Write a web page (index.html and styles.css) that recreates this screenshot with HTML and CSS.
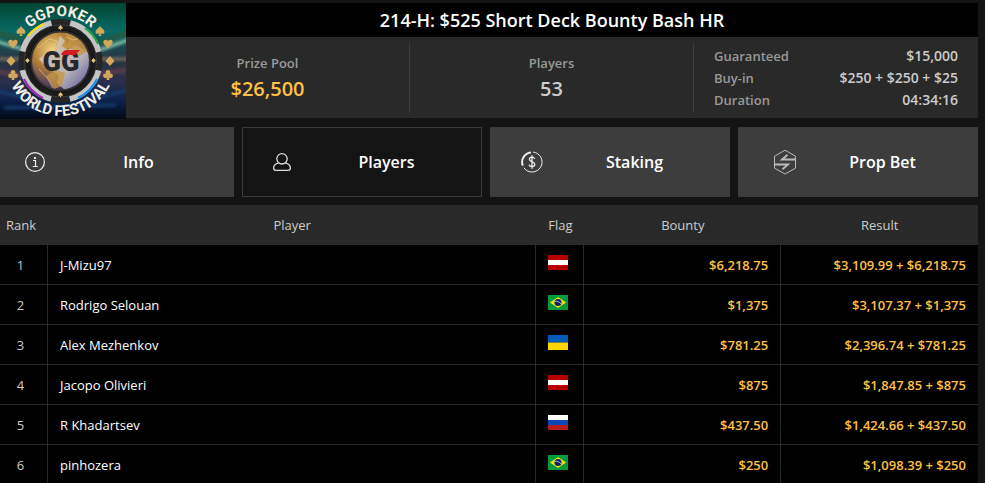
FILE: index.html
```html
<!DOCTYPE html>
<html lang="en">
<head>
  <meta charset="UTF-8">
  <title>214-H: $525 Short Deck Bounty Bash HR</title>
  <meta name="viewport" content="width=device-width, initial-scale=1.0">
  <link rel="stylesheet" href="styles.css">
</head>
<body>
  <!-- Shared flags and suits -->
  <svg class="sprite" aria-hidden="true">
    <symbol id="flag-at" viewBox="0 0 20 15">
      <path fill="#b40000" d="M0 0h20v15H0z"/>
      <path fill="#fff" d="M0 5h20v5H0z"/>
    </symbol>
    <symbol id="flag-br" viewBox="0 0 20 15">
      <path fill="#009b3a" d="M0 0h20v15H0z"/>
      <path fill="#fee000" d="M2 7.5L10 2l8 5.5-8 5.5z"/>
      <circle cx="10" cy="7.5" r="3.5" fill="#0b2272"/>
      <path stroke="#b9c3e6" stroke-width=".9" fill="none" d="M6.8 6.5c2.2-.4 4.5.3 6.2 2.3"/>
    </symbol>
    <symbol id="flag-ua" viewBox="0 0 20 15">
      <path fill="#005bbb" d="M0 0h20v7.5H0z"/>
      <path fill="#ffd500" d="M0 7.5h20V15H0z"/>
    </symbol>
    <symbol id="flag-ru" viewBox="0 0 20 15">
      <path fill="#fff" d="M0 0h20v5H0z"/>
      <path fill="#0c47b7" d="M0 5h20v5H0z"/>
      <path fill="#b71c1c" d="M0 10h20v5H0z"/>
    </symbol>
    <symbol id="spade" viewBox="0 0 10 10">
      <path d="M5 0C4 2 .5 3.6.5 6c0 2 2.7 2.5 4 1L3.500 10h3l-1-3c1.300 1.500 4 1 4-1C9.500 3.600 6 2 5 0z"/>
    </symbol>
    <symbol id="heart" viewBox="0 0 10 10">
      <path d="M5 9.8C4 7.5.3 5.5.3 3 .3.5 3.8 0 5 2.3 6.2 0 9.7.5 9.7 3 9.7 5.5 6 7.5 5 9.8z"/>
    </symbol>
    <symbol id="diamond" viewBox="0 0 10 10">
      <path d="M5 0l4.5 5L5 10 .5 5z"/>
    </symbol>
    <symbol id="club" viewBox="0 0 10 10">
      <circle cx="5" cy="2.5" r="2.4"/><circle cx="2.5" cy="5.8" r="2.4"/><circle cx="7.5" cy="5.8" r="2.4"/>
      <path d="M4.5 4h1l1 6h-3z"/>
    </symbol>
  </svg>

  <div class="page">
    <!-- Tournament summary -->
    <header class="summary">
      <svg class="logo" viewBox="0 0 132 116" role="img" aria-label="GGPoker World Festival">
        <defs>
          <linearGradient id="sky" x1="0" y1="0" x2="0" y2="1">
            <stop offset="0" stop-color="#00452f"/>
            <stop offset=".25" stop-color="#086b68"/>
            <stop offset=".38" stop-color="#1d4750"/>
            <stop offset=".5" stop-color="#263440"/>
            <stop offset=".68" stop-color="#2b2e4d"/>
            <stop offset=".85" stop-color="#0a2149"/>
            <stop offset="1" stop-color="#020814"/>
          </linearGradient>
          <radialGradient id="globe" cx=".35" cy=".3" r=".8">
            <stop offset="0" stop-color="#f0d287"/>
            <stop offset=".4" stop-color="#b48235"/>
            <stop offset=".75" stop-color="#5a4260"/>
            <stop offset="1" stop-color="#28204c"/>
          </radialGradient>
          <linearGradient id="sea" x1="0" y1="0" x2="1" y2="1">
            <stop offset="0" stop-color="#e2c99c"/>
            <stop offset=".6" stop-color="#b9b2b8"/>
            <stop offset="1" stop-color="#4b4a9c"/>
          </linearGradient>
          <filter id="soft"><feGaussianBlur stdDeviation="1.5"/></filter>
          <clipPath id="globe-clip"><circle cx="66.5" cy="58" r="28.5"/></clipPath>
          <path id="arc-top" d="M21.5 58a45 45 0 0 1 90 0"/>
          <path id="arc-bottom" d="M11.5 58a55 55 0 0 0 110 0"/>
        </defs>
        <path fill="url(#sky)" d="M0 0h132v116H0z"/>
        <!-- stadium stands -->
        <g filter="url(#soft)" fill="none">
          <path stroke="#8bc6ab" stroke-width="3" d="M-2 37l30 9M134 37l-28 10"/>
          <path stroke="#245c43" stroke-width="5" d="M134 29l-30 12M-2 28l30 9"/>
          <path stroke="#7d7164" stroke-width="3" d="M-2 56h30M134 56h-30"/>
          <path stroke="#593b4c" stroke-width="5" d="M-2 68l30 4M134 67l-30 4"/>
          <path stroke="#123c70" stroke-width="3" d="M-2 87l34 8M134 87l-32 8M10 105l112-3"/>
        </g>
        <!-- chip -->
        <circle cx="66.5" cy="58" r="42" fill="#252525"/>
        <circle cx="66.5" cy="58" r="39" fill="none" stroke="#c3c5c5" stroke-width="6" stroke-dasharray="42.3 18.96" stroke-dashoffset="-9.5"/>
        <g fill="none" stroke-width="2">
          <path stroke="#f1e000" d="M34 33a41 41 0 0 1 16-12"/>
          <path stroke="#18a83b" d="M91 25a41 41 0 0 1 13 16"/>
          <path stroke="#9a25b9" d="M30 76a41 41 0 0 0 19 19"/>
          <path stroke="#168ef0" d="M103 76a41 41 0 0 1-19 19"/>
        </g>
        <circle cx="66.5" cy="58" r="36" fill="#1b1b1b" stroke="#3b3b38"/>
        <circle cx="66.5" cy="58" r="31" fill="#30302e" stroke="#111"/>
        <g fill="#e5c675">
          <use href="#spade" x="64" y="22" width="5" height="5"/>
          <use href="#spade" x="64" y="89" width="5" height="5"/>
          <use href="#diamond" x="31" y="55" width="5" height="5"/>
          <use href="#diamond" x="97" y="55" width="5" height="5"/>
        </g>
        <circle cx="66.5" cy="58" r="28.5" fill="url(#globe)"/>
        <g clip-path="url(#globe-clip)">
          <path fill="url(#sea)" d="M66 33l5 5-4 5 7 4 7-5 8 4 8 5v28L84 86l-12 2-9-8 2-8-12-7-8-9 7-7 8 1 3-8z"/>
          <path fill="#c59645" opacity=".8" d="M70 29l16 4 8 15-9 5-6-6-7-3 3-7zM62 67l9 3-3 13-8 3-8-13z"/>
          <path fill="none" stroke="#f0d59a" stroke-width=".8" opacity=".7" d="M44 45l11-9 8 2-3 5 6 5M72 34l7 3 8-2M45 66l9 10 5 10"/>
        </g>
        <text class="logo-mark" x="67" y="68" text-anchor="middle">GG</text>
        <path fill="#d51c24" d="M67 52c1-3 3-5 6-5h13l-5 5z"/>
        <g fill="#d2a95a">
          <use href="#spade" x="22" y="23" width="10" height="10"/>
          <use href="#heart" x="14" y="36" width="10" height="10"/>
          <use href="#diamond" x="12" y="53" width="10" height="10"/>
          <use href="#club" x="14" y="67" width="10" height="10"/>
          <use href="#spade" x="101" y="23" width="10" height="10"/>
          <use href="#heart" x="109" y="36" width="10" height="10"/>
          <use href="#diamond" x="111" y="53" width="10" height="10"/>
          <use href="#club" x="109" y="67" width="10" height="10"/>
        </g>
        <text class="logo-text" text-anchor="middle"><textPath href="#arc-top" startOffset="50%">GGPOKER</textPath></text>
        <text class="logo-text" text-anchor="middle"><textPath href="#arc-bottom" startOffset="50%">WORLD FESTIVAL</textPath></text>
      </svg>
      <div class="summary-main">
        <h1 class="summary-title">214-H: $525 Short Deck Bounty Bash HR</h1>
        <div class="stats">
          <div class="stat">
            <div class="stat-label">Prize Pool</div>
            <div class="stat-value gold">$26,500</div>
          </div>
          <div class="stat">
            <div class="stat-label">Players</div>
            <div class="stat-value">53</div>
          </div>
          <dl class="details">
            <div class="detail"><dt>Guaranteed</dt><dd>$15,000</dd></div>
            <div class="detail"><dt>Buy-in</dt><dd>$250 + $250 + $25</dd></div>
            <div class="detail"><dt>Duration</dt><dd>04:34:16</dd></div>
          </dl>
        </div>
      </div>
    </header>

    <!-- Tabs -->
    <nav class="tabs">
      <button class="tab" type="button">
        <span class="tab-icon">
          <svg width="22" height="22" viewBox="0 0 22 22" fill="none" stroke="#eee" stroke-width="1.2">
            <circle cx="11" cy="11" r="9.4"/>
            <path d="M9 9.5h2.5v6M8.8 15.5h5"/>
            <path stroke="none" fill="#eee" d="M10 6h2v2h-2z"/>
          </svg>
        </span>
        <span class="tab-label">Info</span>
      </button>
      <button class="tab active" type="button" aria-current="page">
        <span class="tab-icon">
          <svg width="20" height="20" viewBox="0 0 20 20" fill="none" stroke="#ddd" stroke-width="1.3">
            <circle cx="10" cy="6.8" r="5.2"/>
            <path d="M6.5 11.2C3.5 11.8 1.6 13.5 1.6 16c0 1.5.8 2.3 2.4 2.3h12c1.6 0 2.4-.8 2.4-2.3 0-2.5-1.9-4.2-4.9-4.8"/>
          </svg>
        </span>
        <span class="tab-label">Players</span>
      </button>
      <button class="tab" type="button">
        <span class="tab-icon">
          <svg width="24" height="24" viewBox="0 0 24 24" fill="none" stroke="#eee">
            <path d="M13.2 2.1a10 10 0 1 1-9.3 15.7"/>
            <path stroke-width="2" d="M2.8 15.6A9.6 9.6 0 0 1 11 2.5"/>
            <path stroke-width="1.3" d="M14.6 8.8c-.3-1.1-1.2-1.7-2.6-1.7-1.5 0-2.6.8-2.6 2.2 0 3.3 5.4 1.8 5.4 5 0 1.5-1.2 2.4-2.8 2.4-1.6 0-2.7-.7-3-2M12 5.2v13.6"/>
          </svg>
        </span>
        <span class="tab-label">Staking</span>
      </button>
      <button class="tab" type="button">
        <span class="tab-icon">
          <svg width="34" height="26" viewBox="0 0 34 26" fill="none" stroke="#bbb">
            <path d="M17 1.2l10.5 6v12L17 25 6.5 19.200v-12z"/>
            <path stroke-width="1.8" d="M27.5 10.5H14l5.5-4.7M6.5 15.5H20l-5.5 4.7"/>
          </svg>
        </span>
        <span class="tab-label">Prop Bet</span>
      </button>
    </nav>

    <!-- Results -->
    <table class="results">
      <thead>
        <tr>
          <th class="rank" scope="col">Rank</th>
          <th scope="col">Player</th>
          <th class="flag" scope="col">Flag</th>
          <th class="money" scope="col">Bounty</th>
          <th class="money" scope="col">Result</th>
        </tr>
      </thead>
      <tbody>
        <tr>
          <td class="rank">1</td>
          <td>J-Mizu97</td>
          <td class="flag"><svg role="img" aria-label="Austria"><use href="#flag-at"/></svg></td>
          <td class="money">$6,218.75</td>
          <td class="money">$3,109.99 + $6,218.75</td>
        </tr>
        <tr>
          <td class="rank">2</td>
          <td>Rodrigo Selouan</td>
          <td class="flag"><svg role="img" aria-label="Brazil"><use href="#flag-br"/></svg></td>
          <td class="money">$1,375</td>
          <td class="money">$3,107.37 + $1,375</td>
        </tr>
        <tr>
          <td class="rank">3</td>
          <td>Alex Mezhenkov</td>
          <td class="flag"><svg role="img" aria-label="Ukraine"><use href="#flag-ua"/></svg></td>
          <td class="money">$781.25</td>
          <td class="money">$2,396.74 + $781.25</td>
        </tr>
        <tr>
          <td class="rank">4</td>
          <td>Jacopo Olivieri</td>
          <td class="flag"><svg role="img" aria-label="Austria"><use href="#flag-at"/></svg></td>
          <td class="money">$875</td>
          <td class="money">$1,847.85 + $875</td>
        </tr>
        <tr>
          <td class="rank">5</td>
          <td>R Khadartsev</td>
          <td class="flag"><svg role="img" aria-label="Russia"><use href="#flag-ru"/></svg></td>
          <td class="money">$437.50</td>
          <td class="money">$1,424.66 + $437.50</td>
        </tr>
        <tr>
          <td class="rank">6</td>
          <td>pinhozera</td>
          <td class="flag"><svg role="img" aria-label="Brazil"><use href="#flag-br"/></svg></td>
          <td class="money">$250</td>
          <td class="money">$1,098.39 + $250</td>
        </tr>
      </tbody>
    </table>
  </div>
</body>
</html>
```
FILE: styles.css
```css
* {
  box-sizing: border-box;
}
body {
  margin: 0;
  height: 100vh;
  overflow: hidden;
  background: #141414;
  color: #fff;
  font-family: 'Open Sans', 'Noto Sans', sans-serif;
  font-size: 13px;
}
.sprite {
  display: none;
}
/* content bleeds past the left edge */
.page {
  margin: 0 7px 0 -6px;
  padding-top: 3px;
}
.gold {
  color: #ffc044;
}

/* Summary */
.summary {
  display: flex;
  align-items: flex-start;
  margin-bottom: 8px;
}
.logo {
  display: block;
  flex: none;
  width: 132px;
  height: 116px;
}
.logo-text {
  font-family: Roboto, sans-serif;
  font-size: 15px;
  font-weight: 700;
  fill: #f1eee4;
}
.logo-mark {
  font-family: Roboto, sans-serif;
  font-size: 27px;
  font-weight: 900;
  fill: #25272b;
}
.summary-main {
  flex: 1;
  min-width: 0;
}
.summary-title {
  margin: 0;
  background: #000;
  font-size: 18px;
  font-weight: 600;
  line-height: 34px;
  text-align: center;
}
.stats {
  display: grid;
  grid-template-columns: repeat(3, 1fr);
  padding: 6px 0 5px;
  background: #292929;
}
.stat {
  display: flex;
  flex-direction: column;
  justify-content: center;
  padding-bottom: 2px;
  border-right: 1px solid #3d3d3d;
  text-align: center;
}
.stat-label {
  color: #999;
  font-weight: 600;
  line-height: 24px;
}
.stat-value {
  font-size: 20px;
  font-weight: 600;
  line-height: 28px;
}
.stat-value:not(.gold) {
  color: #ccc;
}
.details {
  margin: 0;
  padding: 2px 20px;
}
.detail {
  display: flex;
  justify-content: space-between;
  font-weight: 600;
  line-height: 22px;
}
.detail dt {
  color: #999;
}
.detail dd {
  margin: 0;
  color: #ccc;
  font-size: 14px;
}

/* Tabs */
.tabs {
  display: grid;
  grid-template-columns: repeat(4, 1fr);
  gap: 8px;
  margin-bottom: 8px;
}
.tab {
  display: flex;
  align-items: center;
  height: 70px;
  padding: 0 0 0 29px;
  border: 1px solid #3d3d3d;
  background: #3d3d3d;
  color: #fff;
  font-family: inherit;
  font-size: 16px;
  font-weight: 600;
  cursor: pointer;
}
.tab.active {
  background: #141414;
}
.tab-icon {
  display: flex;
  flex: none;
  width: 20px;
}
.tab-icon svg {
  flex: none;
}
.tab-label {
  flex: 1;
  text-align: center;
}

/* Results */
.results {
  width: 100%;
  table-layout: fixed;
  border-spacing: 0;
  background: #000;
}
.results th,
.results td {
  height: 40px;
  padding: 0 12px;
  white-space: nowrap;
}
.results th {
  padding: 0;
  background: #292929;
  color: #ccc;
  font-weight: 400;
}
.results td {
  border-right: 1px solid #292929;
  border-bottom: 1px solid #292929;
}
.results td:last-child {
  border-right: 0;
}
.results .rank {
  width: 54px;
  padding: 0;
  text-align: center;
}
.results td.rank {
  color: #ccc;
}
.results .flag {
  width: 48px;
}
.flag svg {
  width: 20px;
  height: 15px;
}
.results .money {
  width: 20%;
}
.results td.money {
  color: #ffc044;
  font-weight: 600;
  text-align: right;
}
```
